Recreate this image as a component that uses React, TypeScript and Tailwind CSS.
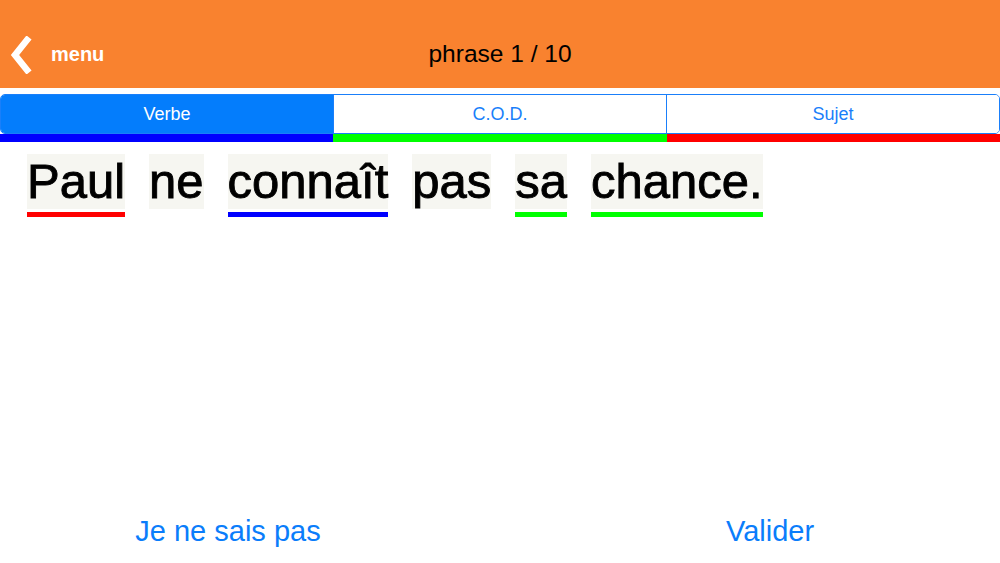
const words = [
  { text: "Paul", line: "bg-[#ff0000]" },
  { text: "ne", line: "" },
  { text: "connaît", line: "bg-[#0000ff]" },
  { text: "pas", line: "" },
  { text: "sa", line: "bg-[#00ff00]" },
  { text: "chance.", line: "bg-[#00ff00]" },
];

const tabs = ["Verbe", "C.O.D.", "Sujet"];

const App = () => {
  return (
    <div className="w-[1000px] h-[563px] bg-white flex flex-col font-['Liberation_Sans',Arial,sans-serif] overflow-hidden">
      {/* Header */}
      <div className="h-[88px] pt-[20px] bg-[#f9822f] flex items-center relative shrink-0">
        <div className="flex items-center pl-[10px] pt-[2px]">
          <svg width="22" height="38" viewBox="0 0 22 38">
            <polyline
              points="17,4 5,19 17,34"
              fill="none"
              stroke="white"
              strokeWidth="6.5"
              strokeLinecap="square"
              strokeLinejoin="miter"
            />
          </svg>
          <span className="ml-[19px] text-white font-bold text-[20px] leading-none -mt-[2px]">menu</span>
        </div>
        <div className="absolute inset-0 pt-[20px] flex items-center justify-center pointer-events-none">
          <span className="text-black text-[24.5px] leading-none">phrase 1 / 10</span>
        </div>
      </div>

      {/* Segmented control */}
      <div className="mt-[6px] shrink-0">
        <div className="flex h-[40px] border border-[#1a7ffa] rounded-[5px] overflow-hidden">
          {tabs.map((t, i) => (
            <div
              key={t}
              className={
                "flex-1 flex items-center justify-center text-[18px] pt-[1px] " +
                (i === 0 ? "bg-[#047dfc] text-white" : "bg-white text-[#1a7ffa] border-l border-[#1a7ffa]")
              }
            >
              {t}
            </div>
          ))}
        </div>
        <div className="flex h-[8px]">
          <div className="flex-1 bg-[#0000ff]" />
          <div className="flex-1 bg-[#00ff00]" />
          <div className="flex-1 bg-[#ff0000]" />
        </div>
      </div>

      {/* Sentence */}
      <div className="flex gap-[24px] pl-[27px] pt-[12px]">
        {words.map((w) => (
          <div key={w.text} className="flex flex-col">
            <div className="bg-[#f6f6f1] h-[55px] text-[49px] leading-[55px] text-black [-webkit-text-stroke:0.9px_black]">
              {w.text}
            </div>
            <div className={"h-[5px] mt-[3px] " + w.line} />
          </div>
        ))}
      </div>

      {/* Bottom buttons */}
      <div className="mt-auto flex justify-between h-[48px] items-start">
        <button className="w-[456px] text-center text-[29px] text-[#0a7dfb] leading-none pt-[2px]">Je ne sais pas</button>
        <button className="w-[460px] text-center text-[29px] text-[#0a7dfb] leading-none pt-[2px]">Valider</button>
      </div>
    </div>
  );
};

export default App;
